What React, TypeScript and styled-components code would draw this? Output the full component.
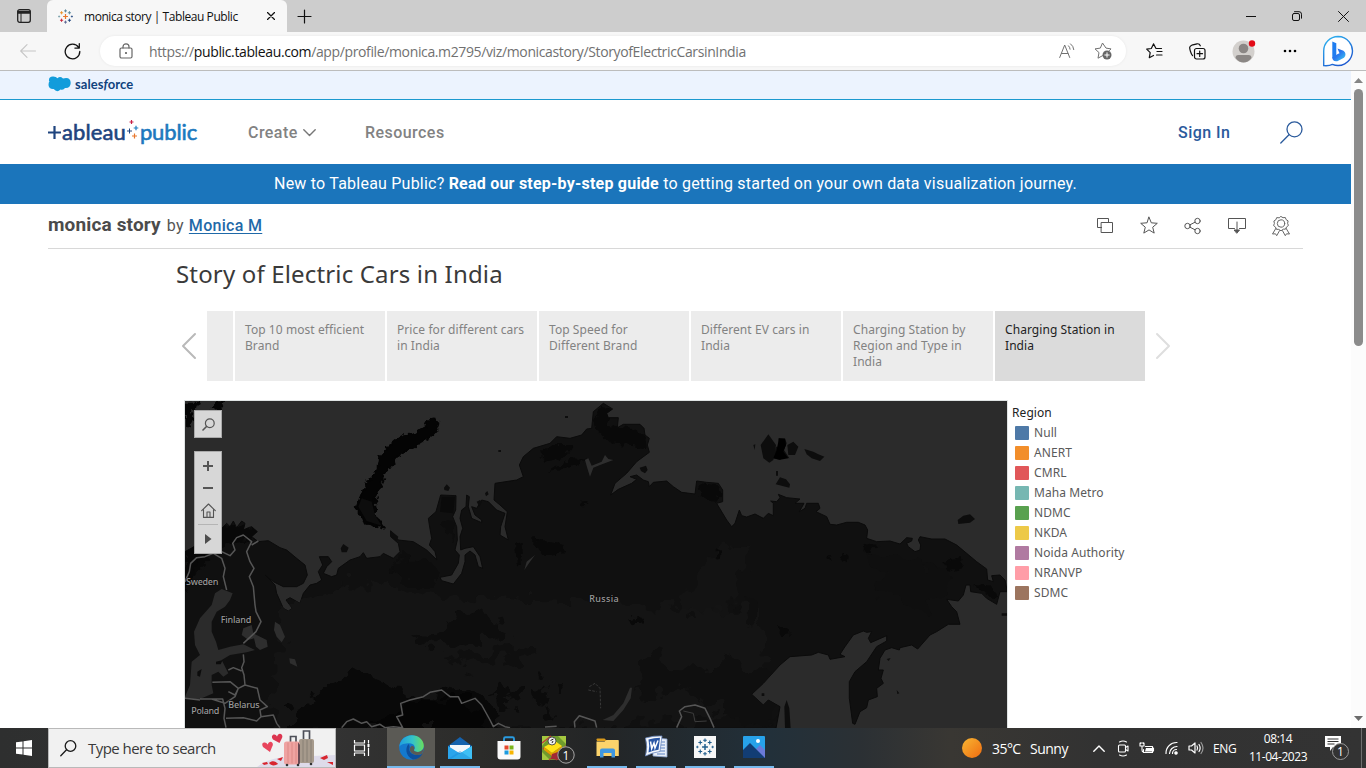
import React from "react";
import styled, { createGlobalStyle } from "styled-components";

const UI = `"Open Sans", "Noto Sans", sans-serif`;
const BENTON = `Roboto, "Liberation Sans", sans-serif`;
const BOOK = `"Noto Sans", "Open Sans", sans-serif`;

const GlobalStyle = createGlobalStyle`
  * { box-sizing: border-box; }
  html, body { margin: 0; padding: 0; background: #fff; overflow: hidden; }
  svg { display: block; flex: none; }
`;

const Screen = styled.div`
  width: 1366px;
  height: 768px;
  display: flex;
  flex-direction: column;
  overflow: hidden;
  font-family: ${UI};
`;

/* ---------- browser frame ---------- */

const TabStrip = styled.div`
  height: 32px;
  flex: none;
  display: flex;
  background: #cdcdcd;
`;

const StripButton = styled.div<{ $w: number }>`
  width: ${(p) => p.$w}px;
  display: flex;
  align-items: center;
  justify-content: center;
`;

const BrowserTab = styled.div`
  width: 240px;
  display: flex;
  align-items: center;
  padding-left: 11px;
  background: #f7f7f7;
  border-radius: 6px 6px 0 0;
`;

const TabTitle = styled.span`
  width: 194px;
  flex: none;
  padding-left: 11px;
  font-size: 12px;
  letter-spacing: -0.44px;
  color: #111;
  white-space: nowrap;
`;

const Spacer = styled.div`
  flex: 1;
`;

const Toolbar = styled.div`
  height: 39px;
  flex: none;
  display: flex;
  align-items: center;
  background: #f7f7f7;
  border-bottom: 1px solid #bcbcbc;
`;

const ToolCell = styled.div<{ $w: number }>`
  width: ${(p) => p.$w}px;
  flex: none;
  display: flex;
  align-items: center;
  justify-content: center;
`;

const AddressBar = styled.div`
  width: 1026px;
  flex: none;
  height: 30px;
  display: flex;
  align-items: center;
  padding-left: 18px;
  padding-right: 5px;
  border-radius: 15px;
  background: #fff;
  box-shadow: 0 0 3px rgba(0, 0, 0, 0.07);
`;

const Url = styled.span`
  flex: 1;
  padding-left: 15px;
  font-size: 14px;
  letter-spacing: -0.37px;
  color: #717171;
  white-space: nowrap;
  b { font-weight: 400; color: #111; }
`;

/* ---------- page ---------- */

const Viewport = styled.div`
  height: 657px;
  flex: none;
  display: flex;
`;

const Page = styled.div`
  width: 1351px;
  display: flex;
  flex-direction: column;
  overflow: hidden;
  background: #fff;
`;

const Scrollbar = styled.div`
  width: 15px;
  padding: 7px 3px;
  display: flex;
  flex-direction: column;
  align-items: center;
  background: #fcfcfc;
`;

const ScrollThumb = styled.div`
  width: 9px;
  height: 257px;
  margin-top: 6px;
  border-radius: 5px;
  background: #8b8b8b;
`;

const SalesforceBar = styled.div`
  height: 29px;
  flex: none;
  display: flex;
  align-items: center;
  padding: 0 0 2px 48px;
  background: #ecf3fe;
  border-bottom: 1px solid #1c99cf;
`;

const SalesforceName = styled.span`
  padding-left: 4px;
  font: 700 13px/16px Lato, sans-serif;
  letter-spacing: 0.05px;
  color: #10427d;
`;

const SiteHeader = styled.header`
  height: 64px;
  flex: none;
  display: flex;
  align-items: center;
  padding: 0 48px;
`;

const Logo = styled.div`
  width: 200px;
  display: flex;
  align-items: center;
`;

const LogoWord = styled.span<{ $c: string; $ls: number }>`
  font: 400 22px/26px Lato, sans-serif;
  letter-spacing: ${(p) => p.$ls}px;
  color: ${(p) => p.$c};
  -webkit-text-stroke: 0.6px ${(p) => p.$c};
`;

const NavItem = styled.div<{ $w: number; $c?: string }>`
  width: ${(p) => p.$w}px;
  display: flex;
  align-items: center;
  gap: 5px;
  padding-top: 2px;
  font: 500 16px/20px ${BENTON};
  letter-spacing: 0.45px;
  color: ${(p) => p.$c ?? "#828282"};
`;

const Banner = styled.div`
  height: 40px;
  flex: none;
  text-align: center;
  font: 400 16px/39px ${BENTON};
  letter-spacing: 0.22px;
  color: #fff;
  background: #1b75bb;
`;

const VizHeader = styled.div`
  height: 45px;
  flex: none;
  margin: 0 48px;
  display: flex;
  align-items: center;
  border-bottom: 1px solid #d8d8d8;
  font-family: ${BENTON};
`;

const VizTitle = styled.h1`
  margin: 0 6px 3px 0;
  font-size: 19px;
  font-weight: 700;
  letter-spacing: 0.15px;
  color: #4b4b4b;
`;

const Byline = styled.span`
  padding-bottom: 2px;
  font-size: 16px;
  letter-spacing: 0.2px;
  color: #555;
  a {
    margin-left: 1px;
    font-weight: 500;
    letter-spacing: 0.3px;
    color: #1f69a8;
    text-decoration: underline;
    text-underline-offset: 2px;
  }
`;

const ActionRow = styled.div`
  display: flex;
  align-items: center;
  gap: 20px;
  margin-right: 10px;
`;

const StoryTitle = styled.h2`
  height: 62px;
  flex: none;
  margin: 0;
  padding: 8px 0 0 176px;
  font: 400 24px/34px ${BOOK};
  letter-spacing: 0.16px;
  color: #3a3a3a;
`;

const StoryNav = styled.div`
  height: 70px;
  flex: none;
  display: flex;
  align-items: center;
  padding-left: 181px;
`;

const StoryPoints = styled.div`
  width: 938px;
  height: 70px;
  margin: 0 10px;
  display: flex;
  gap: 2px;
`;

const StoryPoint = styled.div<{ $w?: number; $active?: boolean }>`
  width: ${(p) => p.$w ?? 150}px;
  flex: none;
  padding: ${(p) => (p.$w ? "0" : "11px 10px")};
  font: 400 12px/16px ${BOOK};
  letter-spacing: 0.07px;
  white-space: pre;
  color: ${(p) => (p.$active ? "#222" : "#828282")};
  background: ${(p) => (p.$active ? "#dbdbdb" : "#ececec")};
`;

const Dashboard = styled.div`
  flex: 1;
  display: flex;
  padding: 20px 0 0 185px;
`;

const MapPane = styled.div`
  position: relative;
  width: 822px;
  height: 327px;
  background: #2b2b2b;
  outline: 1px solid #dfe3e3;
  svg text { font-family: "Noto Sans", sans-serif; }
`;

const MapControls = styled.div`
  position: absolute;
  left: 9px;
  top: 9px;
  display: flex;
  flex-direction: column;
  gap: 13px;
`;

const ControlGroup = styled.div<{ $h: number }>`
  width: 28px;
  height: ${(p) => p.$h}px;
  display: flex;
  flex-direction: column;
  align-items: center;
  background: #d7d7d7;
  border: 1px solid #aaa;
`;

const Control = styled.div<{ $h: number; $rule?: boolean }>`
  width: 20px;
  height: ${(p) => p.$h}px;
  display: flex;
  align-items: center;
  justify-content: center;
  border-top: ${(p) => (p.$rule ? "1px solid #b5b5b5" : "none")};
`;

const Legend = styled.div`
  padding: 2px 0 0 5px;
  font: 400 12px/20px ${BOOK};
  letter-spacing: 0.08px;
  color: #5a5a5a;
`;

const LegendTitle = styled.div`
  color: #222;
`;

const LegendRow = styled.div`
  height: 20px;
  display: flex;
  align-items: center;
  gap: 5px;
  padding-left: 3px;
`;

const Swatch = styled.span<{ $c: string }>`
  width: 14px;
  height: 14px;
  border-radius: 1px;
  background: ${(p) => p.$c};
`;

/* ---------- taskbar ---------- */

const Taskbar = styled.div`
  height: 40px;
  flex: none;
  display: flex;
  color: #fff;
  background: linear-gradient(90deg, #2e2f2f 0, #333 330px, #2c2c2a 480px, #232526 600px, #22303a 770px, #2b3034 860px, #393733 950px, #323232 1100px, #333 1366px);
`;

const StartButton = styled.div`
  width: 48px;
  display: flex;
  align-items: center;
  justify-content: center;
`;

const SearchBox = styled.div`
  width: 288px;
  height: 40px;
  display: flex;
  align-items: center;
  padding-left: 11px;
  background: #f1f1f1;
  border: 1px solid #b9b9b9;
`;

const SearchHint = styled.span`
  width: 164px;
  padding-left: 11px;
  font-size: 15px;
  letter-spacing: -0.54px;
  color: #3a3a3a;
  white-space: nowrap;
`;

const AppButton = styled.div<{ $top: number; $open?: boolean; $active?: boolean }>`
  width: 49px;
  height: 40px;
  padding: ${(p) => p.$top}px ${(p) => (p.$active ? 1 : 5)}px 0 ${(p) => (p.$active ? 0 : 4)}px;
  display: flex;
  flex-direction: column;
  justify-content: space-between;
  align-items: center;
  background: ${(p) => (p.$active ? "linear-gradient(90deg, #5b5a55 48px, transparent 48px)" : "transparent")};
  &::after {
    content: "";
    width: 100%;
    height: 2px;
    background: ${(p) => (p.$open || p.$active ? "#76b9ed" : "transparent")};
  }
`;

const TrayItem = styled.div<{ $w: number }>`
  width: ${(p) => p.$w}px;
  flex: none;
  display: flex;
  align-items: center;
  justify-content: center;
`;

const TrayText = styled.span<{ $w: number; $s: number; $ls?: number; $pl?: number }>`
  width: ${(p) => p.$w}px;
  flex: none;
  align-self: center;
  padding-left: ${(p) => p.$pl ?? 0}px;
  font-size: ${(p) => p.$s}px;
  letter-spacing: ${(p) => p.$ls ?? 0}px;
  white-space: nowrap;
`;

const Clock = styled.div`
  width: 68px;
  display: flex;
  flex-direction: column;
  align-items: center;
  padding-top: 2px;
  font-size: 12px;
  line-height: 18px;
  letter-spacing: -0.45px;
  white-space: nowrap;
`;

const DesktopEdge = styled.div`
  width: 1px;
  height: 40px;
  margin-right: 4px;
  background: #6e6e6e;
`;

/* ---------- drawings ---------- */

type P = { w: number; h: number; vb?: string; c?: string; sw?: number; children: React.ReactNode };
const Line = ({ w, h, vb, c = "#222", sw = 1, children }: P) => (
  <svg width={w} height={h} viewBox={vb ?? `0 0 ${w} ${h}`} fill="none" stroke={c} strokeWidth={sw} strokeLinecap="round" strokeLinejoin="round">
    {children}
  </svg>
);

const plus = (x: number, y: number, r: number) => `M${x - r} ${y}h${2 * r}M${x} ${y - r}v${2 * r}`;

const TableauMark = ({ size, mono }: { size: number; mono?: boolean }) => {
  const k = (c: string) => (mono ? "#1f5d8c" : c);
  return (
    <svg width={size} height={size} viewBox="0 0 16 16" fill="none">
      <path d={plus(8, 8, 2.6)} stroke={k("#e8762b")} strokeWidth="1.3" />
      <path d={plus(8, 2, 1.6)} stroke={k("#5b879b")} strokeWidth="1" />
      <path d={plus(8, 14, 1.6)} stroke={k("#5b6591")} strokeWidth="1" />
      <path d={plus(3.8, 4, 1.7)} stroke={k("#eb9129")} strokeWidth="1" />
      <path d={plus(12.2, 4, 1.7)} stroke={k("#59879b")} strokeWidth="1" />
      <path d={plus(3.8, 12, 1.7)} stroke={k("#c72035")} strokeWidth="1" />
      <path d={plus(12.2, 12, 1.7)} stroke={k("#1f447e")} strokeWidth="1" />
      <path d={plus(1.2, 8, 1.1)} stroke={k("#7099a6")} strokeWidth="0.8" />
      <path d={plus(14.8, 8, 1.1)} stroke={k("#1f447e")} strokeWidth="0.8" />
    </svg>
  );
};

const BingIcon = () => (
  <svg width="32" height="32" viewBox="0 0 32 32">
    <defs>
      <linearGradient id="bRing" x1="0" y1="0" x2="0.6" y2="1">
        <stop offset="0" stopColor="#2fb9f2" />
        <stop offset="1" stopColor="#1f5bd0" />
      </linearGradient>
      <linearGradient id="bBody" x1="0" y1="0" x2="1" y2="1">
        <stop offset="0" stopColor="#1c52d8" />
        <stop offset="0.5" stopColor="#2b7df0" />
        <stop offset="1" stopColor="#3fd2ee" />
      </linearGradient>
    </defs>
    <path d="M16 1.500a14.500 14.500 0 1 1-5.600 27.900C8 30.600 5 30.900 1.700 30.600V16A14.500 14.500 0 0 1 16 1.500z" fill="#fff" stroke="url(#bRing)" strokeWidth="1.400" />
    <path d="M10.300 6.500l4 1.700v12.300l-4 3z" fill="#1f7df0" />
    <path d="M10.300 22.500l5-3.300 2.200-1-2-4.800 6 2.400a4.300 4.300 0 0 1 .5 6.900l-6.700 3.500c-3 .6-5-.9-5-3.700z" fill="url(#bBody)" />
  </svg>
);

const EdgeIcon = () => (
  <svg width="25" height="25" viewBox="0 0 24 24">
    <defs>
      <linearGradient id="eTop" x1="0" y1="0.3" x2="1" y2="0.3">
        <stop offset="0" stopColor="#1f9de0" />
        <stop offset="0.55" stopColor="#35c4c8" />
        <stop offset="1" stopColor="#6ade5b" />
      </linearGradient>
    </defs>
    <circle cx="12" cy="12" r="11.800" fill="#1479ce" />
    <path d="M.3 11.500C.8 5 6 .2 12.300.2 19 .2 23.800 5 23.800 10.200c0 3.700-2.800 6-6 6-2.700 0-4-1.200-3.200-2.300 1.600-2.300-.2-6-4.600-6-4 0-8.500 1-9.700 3.600z" fill="url(#eTop)" />
    <path d="M9.500 8.700C6 11 5.500 20.500 13.500 23.600 18 23.300 21 21 22.500 18c-4.500 2.600-14.500 1.200-12.300-6.500z" fill="#0e4f9d" />
    <path d="M14.700 13.500c-1 1.300.3 2.700 3 2.700 2.500 0 5-1.200 5.900-3.500-.2 2-.7 4-1.800 5.500-4 2.300-10.300.5-11.300-3.300-.5-2.200.6-4 2-4.500 1.800.2 2.800 1.700 2.200 3.100z" fill="#5b5a55" />
  </svg>
);

const MailIcon = () => (
  <svg width="24" height="22" viewBox="0 0 24 22">
    <path d="M0 9L12 0l12 9v3H0z" fill="#1562ad" />
    <path d="M2 8h20v8H2z" fill="#f3f6fa" />
    <path d="M0 9l12 7.500L24 9v13H0z" fill="#2aa5ec" />
    <path d="M24 9v13H3z" fill="#3fc0f5" />
    <path d="M0 22l12-8 12 8z" fill="#1b90dc" opacity=".5" />
  </svg>
);

const StoreIcon = () => (
  <svg width="24" height="24" viewBox="0 0 24 24">
    <path d="M7 7V2.800A1.500 1.500 0 0 1 8.500 1.300h7A1.500 1.500 0 0 1 17 2.800V7" fill="none" stroke="#2a9be0" strokeWidth="1.900" />
    <path d="M.5 5h23v15.500a3 3 0 0 1-3 3h-17a3 3 0 0 1-3-3z" fill="#fafafa" />
    <path d="M7.500 9.500h4v4h-4z" fill="#e5492d" />
    <path d="M12.500 9.500h4v4h-4z" fill="#7bb51b" />
    <path d="M7.500 14.500h4v4h-4z" fill="#1b9be0" />
    <path d="M12.500 14.500h4v4h-4z" fill="#f7b500" />
  </svg>
);

const GameIcon = () => (
  <svg width="34" height="30" viewBox="0 0 34 30">
    <path d="M1 2h24v24H1z" fill="#6f9a2c" />
    <path d="M1 2h8L1 12zM17 2h8v8zM1 18l8 8H1z" fill="#a5c840" />
    <path d="M1 9l9-7M25 12L8 26M2 14l14 12" stroke="#c23a3a" strokeWidth="1.200" />
    <path d="M3 13l11-6 7 5-10 7z" fill="#ffe21a" />
    <path d="M3 13l8 6v3l-8-6zM11 19l10-7v3l-10 7z" fill="#e0a300" />
    <circle cx="11" cy="7" r="4" fill="#eee" stroke="#333" strokeWidth=".800" />
    <path d="M9.500 6.500l3-1.500M11 9l1-2" stroke="#222" strokeWidth="1" />
    <path d="M11 20l12-4 2 6-6 4-9-1z" fill="#a02a35" />
    <circle cx="25" cy="21" r="8.200" fill="#2b2b2b" stroke="#a5a5a5" strokeWidth="1" />
    <text x="25" y="25.500" fontSize="12" fill="#fff" textAnchor="middle" fontFamily="Open Sans">1</text>
  </svg>
);

const FolderIcon = () => (
  <svg width="23" height="20" viewBox="0 0 23 20">
    <path d="M.5 1.500A1 1 0 0 1 1.500.5h7L11 3H1z" fill="#d99a1c" />
    <path d="M.5 3.500h8l2-1.500h11.500a.8.8 0 0 1 .8.800V18H.5z" fill="#fbd36b" />
    <path d="M4 19.500V12.500A2 2 0 0 1 6 10.500h11a2 2 0 0 1 2 2v7h-3.500V15h-8v4.500z" fill="#3f97e0" />
  </svg>
);

const WordIcon = () => (
  <svg width="24" height="24" viewBox="0 0 24 24">
    <path d="M9 3l14 1v18L9 21z" fill="#e8eef8" stroke="#8aa3cf" strokeWidth=".8" />
    <path d="M16 7h5M16 10h5M15 13h6M15 16h6M13 19h8" stroke="#5d83c4" strokeWidth="1" />
    <path d="M1.500 3Q10 .5 18 1L16 16.500Q8 17.500 1.500 21Q4 12 1.500 3z" fill="#f5f8fd" stroke="#6d8ac0" strokeWidth=".8" />
    <path d="M4.500 4.500Q10 2.800 16 2.700L14.500 14.800Q9 15.500 4.500 17.500Q6 11 4.500 4.500z" fill="#2a57a5" />
    <path d="M6.500 6.500l1.200 7 2.300-5.500 1 5 3-7.500" fill="none" stroke="#fff" strokeWidth="1.500" />
  </svg>
);

const PhotosIcon = () => (
  <svg width="22" height="22" viewBox="0 0 22 22">
    <rect width="22" height="22" rx="1" fill="#27a2ea" />
    <path d="M12 14l5-5 5 5v8H12z" fill="#6a7ad8" />
    <path d="M0 14l7-7 15 15H0z" fill="#123d74" />
    <circle cx="15" cy="5" r="2" fill="#fff" />
  </svg>
);

const Suitcases = () => (
  <svg width="78" height="38" viewBox="0 0 78 38">
    <path d="M0 38Q12 28 34 28L78 26V38z" fill="#dedbea" />
    <path d="M13 23L6 18Q4 14 7 13.500Q9.500 13 10.500 15.500Q12 12 14.500 13Q17 14.500 15 18z" fill="#e8455c" />
    <path d="M22.500 14L16 10.500Q13.500 7 16.500 5.500Q19 5 20 7.500Q21 4 24 5Q26.500 7 24.500 10z" fill="#dc3550" />
    <path d="M46.500 11V2h6v9M33.500 13V7.500h5.500V13" fill="none" stroke="#4d4f58" strokeWidth="1.700" />
    <rect x="42" y="10" width="15" height="24" rx="2" fill="#a69a8c" />
    <path d="M46 11v22M50 11v22M54 11v22" stroke="#82786e" strokeWidth=".8" />
    <rect x="27" y="12.500" width="16" height="23" rx="2.500" fill="#efa3a1" />
    <path d="M31 13.500v21M35 13.500v21M39 13.500v21" stroke="#d98482" strokeWidth=".8" />
    <path d="M41 13.500l2 2v19l-2 1z" fill="#694c55" />
    <path d="M12 34c3-3 7-2 9 1-3 2-7 2-9-1zM5 34l5-1 1 2-4 1zM20 30l6-2-2 4zM63 29l7-3 1 3-4 2zM70 33l6 0 0 3z" fill="#d8262f" />
    <circle cx="30" cy="36" r="1.300" fill="#333" /><circle cx="41" cy="36" r="1.300" fill="#333" /><circle cx="54" cy="35" r="1.300" fill="#333" />
  </svg>
);

/* Map geometry uses three units per screen pixel. */
const MAINLAND =
  "M15 470L42 455L60 430L125 400L140 385L150 395L160 378L170 398L185 378L195 385L190 405L205 398L215 395L232 410L215 425L235 440L265 437L300 458L320 465L350 490L375 510L382 540L370 565L350 575L310 575L280 560L255 540L285 570L290 595L310 640L325 648L337 640L318 615L330 608L360 625L370 595L390 570L410 565L425 555L415 530L428 510L418 485L445 485L455 500L440 515L430 535L455 545L470 540L475 520L510 495L540 485L550 473L560 490L600 485L610 475L640 490L660 470L655 445L632 425L632 408L655 435L700 440L740 465L771 495L765 470L748 450L755 430L748 390L745 370L768 350L782 300L828 302L827 345L818 365L830 395L832 435L825 465L838 480L835 505L815 540L780 547L785 557L820 567L845 535L855 500L855 480L870 468L885 480L895 515L908 520L900 485L880 455L855 460L842 465L840 425L848 400L840 370L845 345L858 335L860 300L868 305L865 335L875 370L905 383L905 375L885 360L875 335L890 340L905 315L925 320L950 345L975 355L962 395L960 420L985 435L975 395L982 350L960 330L942 315L945 265L1010 255L1030 245L1018 210L1030 185L1060 160L1110 145L1130 125L1170 130L1205 120L1220 102L1235 100L1240 50L1270 25L1298 42L1280 55L1285 68L1315 68L1312 98L1330 88L1380 88L1392 100L1395 120L1408 130L1402 150L1408 172L1370 200L1340 235L1305 265L1292 300L1315 283L1355 265L1370 253L1350 245L1370 240L1390 255L1405 260L1408 275L1420 262L1460 258L1480 275L1505 292L1545 297L1550 258L1580 262L1615 265L1628 285L1628 320L1610 325L1640 375L1655 395L1665 385L1678 345L1685 362L1700 366L1725 357L1750 370L1765 355L1780 362L1780 325L1772 318L1790 320L1800 308L1795 298L1820 308L1860 312L1845 325L1872 325L1858 350L1875 340L1880 325L1915 325L1920 340L1908 350L1940 365L1950 388L1970 390L2000 382L2035 382L2055 390L2063 405L2060 430L2090 440L2130 438L2160 447L2180 428L2197 430L2195 438L2180 445L2185 455L2205 470L2220 465L2222 450L2215 435L2220 425L2255 432L2295 432L2330 450L2360 475L2390 500L2420 522L2423 555L2440 560L2435 542L2460 540L2475 555L2482 590L2460 590L2450 628L2420 610L2405 595L2372 590L2370 570L2358 570L2350 600L2335 618L2300 613L2315 635L2330 650L2340 688L2305 688L2270 710L2250 720L2213 762L2195 750L2160 758L2158 765L2135 758L2115 765L2100 790L2095 825L2110 825L2103 850L2110 865L2090 880L2092 905L2065 915L2060 938L2040 950L2025 988L2018 985L2008 910L2008 860L2025 830L2060 800L2090 755L2120 738L2120 722L2072 743L2065 730L2075 710L2060 712L2050 708L2020 720L1995 755L1980 778L1995 785L1950 793L1945 780L1915 772L1895 780L1830 785L1800 810L1750 865L1715 898L1750 930L1765 915L1800 935L1788 1000L15 1000Z";

const BALTIC =
  "M15 905L30 870L35 800L60 780L45 750L42 710L60 670L95 630L105 595L125 582L158 595L150 615L135 635L110 650L95 680L95 710L108 740L115 765L150 755L190 748L225 765L200 772L150 780L125 795L145 835L130 845L115 830L95 840L95 870L100 895L60 912L15 912Z";

const ISLANDS =
  "M775 85Q778 70 755 70Q735 72 733 95L700 118L665 120L630 150L598 185L590 230L565 255L545 295L530 335L548 380L600 395L611 398L590 370L582 325L598 280L620 230L655 180L700 155L750 125Q775 110 775 85Z";

const SMALL_ISLANDS =
  "M482 460L490 447L506 458L500 472L485 472ZM792 278L800 268L810 278L805 288L793 285ZM1742 150L1765 118L1788 150L1780 195L1768 203L1750 190ZM1780 190L1788 155L1798 155L1795 130L1815 130L1820 145L1812 165L1828 190L1810 185L1800 195ZM1822 150L1840 140L1855 155L1845 180L1825 180ZM1873 162L1900 170L1915 178L1933 185L1920 198L1895 190L1880 178ZM1787 268L1800 247L1818 253L1830 268L1828 278ZM2333 375L2350 362L2370 358L2385 372L2370 383L2335 387ZM1813 935L1820 915L1828 940L1832 1000L1815 1000ZM1379 218L1398 212L1403 225L1395 235L1383 228ZM915 295L922 288L926 298L918 304ZM890 320L900 315L906 322L898 335ZM1720 150L1726 148L1724 165ZM1788 228h6v14h-6zM2465 655h16v7h-16zM2120 792l12-3-6 9zM2150 885l8 10-6 2zM955 165h8v6h-8zM1155 63h9v6h-9zM1745 895h8v8h-8z";

const LAKES =
  "M190 700L215 690L220 715L260 735L263 755L240 765L228 755L222 730L205 735L185 720ZM285 680L300 690L315 725L305 742L290 725L282 705ZM328 790L345 793L352 815L330 805ZM1033 525L1040 500L1065 480L1050 500ZM1215 195L1225 190L1235 212L1265 200L1275 180L1285 192L1300 195L1260 210L1240 218L1230 245L1222 220ZM1350 878L1356 878L1352 910L1330 945L1300 978L1268 975L1300 960L1330 925Z";

const RIDGES =
  "M15 490L60 470L90 490L50 530L15 580ZM1080 170L1120 150L1180 150L1150 190L1090 200ZM1100 230L1180 190L1215 195L1150 225ZM1240 95L1260 35L1295 42L1280 90L1340 95L1395 120L1400 160L1360 150L1290 145ZM1555 265L1610 270L1625 300L1600 320L1560 300ZM1060 425L1100 440L1150 450L1155 475L1100 480L1060 455ZM1005 440L1025 450L1025 515L1010 505ZM2290 500L2340 490L2350 515L2310 530ZM1790 690L1830 705L1835 715L1800 718ZM2055 445L2095 450L2070 475L2050 468ZM1932 490L1950 480L1955 495ZM1988 470L2003 480L2000 505L1985 495ZM2380 570L2440 575L2455 610L2410 595ZM1345 675L1380 665L1390 680L1360 692ZM1610 460L1625 465L1622 498L1612 490ZM1200 320L1220 318L1218 330L1200 332Z";

const MapDrawing = () => (
  <svg width="822" height="327" viewBox="15 18 2466 981">
    <defs>
      <filter id="relief" filterUnits="userSpaceOnUse" x="15" y="18" width="2466" height="981" colorInterpolationFilters="sRGB">
        <feTurbulence type="fractalNoise" baseFrequency="0.018" numOctaves="3" seed="4" result="n" />
        <feDisplacementMap in="SourceGraphic" in2="n" scale="110" xChannelSelector="R" yChannelSelector="G" />
      </filter>
      <filter id="ragged" filterUnits="userSpaceOnUse" x="15" y="18" width="2466" height="981" colorInterpolationFilters="sRGB">
        <feTurbulence type="fractalNoise" baseFrequency="0.060" numOctaves="2" seed="9" result="n" />
        <feDisplacementMap in="SourceGraphic" in2="n" scale="26" xChannelSelector="R" yChannelSelector="G" />
      </filter>
      <clipPath id="shore"><path d={MAINLAND} /></clipPath>
    </defs>
    <path d={MAINLAND} fill="#101010" stroke="#0b0b0b" strokeWidth="3" />
    <g clipPath="url(#shore)">
      <g filter="url(#relief)">
        <path d="M300 640L520 560L760 600L1050 620L1400 630L1640 640L1740 660L1760 850L1700 960L1300 1000L280 1000Z" fill="#141414" />
        <path d="M1500 600L1560 540L1620 470L1700 450L1680 540L1660 650L1500 640Z" fill="#131313" />
        <path d="M330 940L420 880L520 830L640 860L700 910L800 880L880 890L980 960L960 1010L330 1010Z" fill="#090909" />
        <path d="M560 1010L640 960L760 900L860 900L920 1010Z" fill="#050505" />
        <path d="M690 740L780 700L860 640L930 670L1000 720L920 740L840 740L780 760Z" fill="#0d0d0d" />
        <path d="M800 790L900 770L1060 740L1080 770L950 800L840 820Z" fill="#0f0f0f" />
        <path d="M1050 880L1110 850L1100 900L1110 950L1060 940ZM960 870L1010 900L1000 940L940 900ZM1140 850L1165 850L1150 890L1130 890Z" fill="#0b0b0b" />
        <path d="M1390 800L1440 770L1470 810L1560 820L1640 800L1780 830L1780 1010L1640 960L1500 870L1360 900Z" fill="#0f0f0f" />
        <path d="M1510 665L1550 660L1540 690L1515 690ZM1680 620L1720 610L1730 680L1690 690Z" fill="#0f0f0f" />
        <path d="M640 500L740 490L760 560L660 560ZM780 390L820 400L810 450L785 440Z" fill="#0d0d0d" />
        <path d="M2060 470L2200 480L2330 560L2240 640L2120 600Z" fill="#0f0f0f" />
      </g>
      <path d={RIDGES} fill="#090909" filter="url(#ragged)" />
      <path d="M785 305L825 305L820 355L780 350Z" fill="#0a0a0a" />
      <path d="M15 460L130 390L240 400L230 430L150 445L60 490L15 590Z" fill="#080808" filter="url(#ragged)" />
    </g>
    <path d="M15 20L55 20L48 38L32 50L42 68L30 96L15 78ZM95 45L108 20L138 18L122 42Z" fill="#050505" filter="url(#ragged)" />
    <path d={BALTIC} fill="#2b2b2b" />
    <path d="M52 830L65 822L60 845L52 842ZM108 800L128 795L122 808L108 808Z" fill="#0c0c0c" />
    <path d={LAKES} fill="#2e2e2e" />
    <path d={ISLANDS} fill="#040404" stroke="#040404" strokeWidth="5" filter="url(#ragged)" />
    <path d="M535 335L545 310L575 320L585 360L605 392L560 378Z" fill="#0d0d0d" />
    <path d={SMALL_ISLANDS} fill="#0d0d0d" />
    <path d="M1780 190L1790 165L1797 130L1815 132L1818 150L1810 170L1825 190L1800 194Z" fill="#000" />
    <path d="M630 405L655 425L650 438L632 422Z" fill="#0d0d0d" />
    <g fill="none" stroke="#565656" strokeWidth="4.500" strokeLinejoin="round">
      <path d="M15 560L28 530L32 505L50 488L75 485L100 475L125 490L135 520L130 545L140 585M125 470L150 482L165 465L158 445L170 428L190 420L215 440L200 470L210 500L222 520L208 545L220 575L225 630L228 650L243 680L228 710L190 745M235 438L215 450M190 778L192 800L185 818L192 840L195 870L175 880L165 900L145 890M145 825L160 818L185 828M97 862L150 860L175 880L165 905L135 925L95 912M60 912L128 912L135 940L132 970L138 998M195 870L232 880L240 915L262 935L240 945L243 965L280 960L290 985L300 998M138 970L190 968L230 978L243 965M15 910L60 915" />
      <path d="M485 998L500 980L520 972L545 985L560 980L575 995L600 988L615 998L640 995L668 998L650 965L668 960L662 925L690 915L730 905L750 892L785 885L810 905L835 905L845 925L885 910L905 930L930 975L940 995L955 985L975 995L990 998M1095 996L1130 994M1185 998L1183 980L1198 962L1245 978L1250 998M1490 998L1505 965L1498 948L1515 935L1545 930L1575 940L1590 970L1602 998" />
      <path d="M1510 948L1540 955L1545 980L1580 978" strokeWidth="3" stroke="#3c3c3c" />
      <path d="M1228 875L1245 865L1260 880L1262 940M1225 885L1250 890" strokeWidth="3" strokeDasharray="8 4" stroke="#383838" />
    </g>
    <g fontSize="27" fill="#9a9a9a" stroke="#0a0a0a" strokeWidth="3" paintOrder="stroke" fontWeight="500">
      <text x="18" y="570" textLength="97">Sweden</text>
      <text x="122" y="684" textLength="92">Finland</text>
      <text x="145" y="938" textLength="94">Belarus</text>
      <text x="34" y="958" textLength="84">Poland</text>
      <text x="1228" y="620" textLength="88">Russia</text>
    </g>
  </svg>
);

const points = [
  "Top 10 most efficient\nBrand",
  "Price for different cars\nin India",
  "Top Speed for\nDifferent Brand",
  "Different EV cars in\nIndia",
  "Charging Station by\nRegion and Type in\nIndia",
  "Charging Station in\nIndia",
];

const regions: [string, string][] = [
  ["Null", "#4e79a7"],
  ["ANERT", "#f28e2b"],
  ["CMRL", "#e15759"],
  ["Maha Metro", "#76b7b2"],
  ["NDMC", "#59a14f"],
  ["NKDA", "#edc948"],
  ["Noida Authority", "#b07aa1"],
  ["NRANVP", "#ff9da7"],
  ["SDMC", "#9c755f"],
];

const star = "M9 1.200l2.300 5.600 6 .5-4.600 3.900 1.500 5.900L9 13.900l-5.200 3.200 1.500-5.900L.7 7.300l6-.5z";

export default function App() {
  return (
    <Screen>
      <GlobalStyle />
      <TabStrip>
        <StripButton $w={47}>
          <Line w={14} h={14} sw={1.3}>
            <rect x="0.700" y="0.700" width="12.600" height="12.600" rx="2" />
            <path d="M1 2.500h12M1 4h12" />
            <path d="M4 4v9" strokeWidth="1" />
          </Line>
        </StripButton>
        <BrowserTab>
          <TableauMark size={15} />
          <TabTitle>monica story | Tableau Public</TabTitle>
          <Line w={8} h={8} sw={1.3} c="#111"><path d="M.5.5l7 7M7.500.5l-7 7" /></Line>
        </BrowserTab>
        <StripButton $w={35}>
          <Line w={15} h={15} sw={1.2} c="#111"><path d="M7.500 1v13M1 7.500h13" /></Line>
        </StripButton>
        <Spacer />
        <StripButton $w={46}><Line w={10} h={10} c="#111"><path d="M0 5.500h10" /></Line></StripButton>
        <StripButton $w={46}>
          <Line w={10} h={10} c="#111"><rect x=".5" y="2.500" width="7" height="7" rx="1.500" /><path d="M2.500.7h4.500a2.500 2.500 0 0 1 2.500 2.500v4" /></Line>
        </StripButton>
        <StripButton $w={46}><Line w={11} h={11} c="#111"><path d="M.5.5l10 10M10.500.5l-10 10" /></Line></StripButton>
      </TabStrip>

      <Toolbar>
        <ToolCell $w={56}><Line w={16} h={14} c="#c6c6c6" sw={1.1}><path d="M15.500 7H.7M7 .7L.7 7 7 13.300" /></Line></ToolCell>
        <ToolCell $w={32}>
          <Line w={17} h={17} c="#111" sw={1.3}><path d="M14.600 4.500A7.300 7.300 0 1 0 15.800 8.500M15.300.7v4.400h-4.400" /></Line>
        </ToolCell>
        <ToolCell $w={12}>{null}</ToolCell>
        <AddressBar>
          <Line w={16} h={16} c="#666" sw={1.2}>
            <rect x="2" y="5" width="12" height="10" rx="1.500" />
            <path d="M5 5V3.800a3 3 0 0 1 6 0V5" />
            <circle cx="8" cy="10" r=".5" fill="#666" />
          </Line>
          <Url>https://<b>public.tableau.com</b>/app/profile/monica.m2795/viz/monicastory/StoryofElectricCarsinIndia</Url>
          <ToolCell $w={36}>
            <Line w={16} h={16} c="#717171"><path d="M.7 14.500L5.700 2l5 12.500M2.500 10.500h6.500M9.500 2.800a5 5 0 0 1 1.600 3.400M11.500.8a8 8 0 0 1 3.300 5.800" /></Line>
          </ToolCell>
          <ToolCell $w={36}>
            <Line w={18} h={18} c="#717171">
              <path d="M15.500 8.500l1.500-1.600-5-.8L8.500 1 6.300 6.100l-5.300.8 4 3.700-1 5.600 4.500-2.500" />
              <circle cx="13" cy="13" r="4.500" fill="#666" stroke="none" />
              <path d="M13 10.800v4.400M10.800 13h4.400" stroke="#fff" />
            </Line>
          </ToolCell>
        </AddressBar>
        <ToolCell $w={56}>
          <Line w={17} h={16} c="#111" sw={1.2}>
            <path d="M15.500 5.500H10L7.500.9 5.300 5.500.7 6.200l3.500 3.500-.9 5L7.500 12.500M11 8.500h5M10.500 12h5.500" />
          </Line>
        </ToolCell>
        <ToolCell $w={32}>
          <Line w={18} h={17} c="#111" sw={1.2}>
            <rect x="5.500" y="5.500" width="10.500" height="10.500" rx="2" fill="#f7f7f7" />
            <path d="M10.700 8v5.500M8 10.700h5.500M3.500 12.500C2 11 .3 5.500.8 4c.3-1 1-1.400 2-1.800L8 .8c1.700-.3 2.700.3 3.300 2" />
          </Line>
        </ToolCell>
        <ToolCell $w={60}>
          <svg width="24" height="24" viewBox="0 0 24 24">
            <circle cx="11.500" cy="12.500" r="11" fill="#d3d0cd" />
            <circle cx="11.500" cy="9.500" r="4.800" fill="#8b8785" />
            <path d="M3.500 19q0-3 3-3h10q3 0 3 3-3.500 4.500-8 4.500T3.500 19z" fill="#8b8785" />
            <circle cx="20" cy="4.500" r="3.200" fill="#e30b17" />
          </svg>
        </ToolCell>
        <ToolCell $w={32}>
          <svg width="14" height="4"><circle cx="2" cy="2" r="1.300" /><circle cx="7" cy="2" r="1.300" /><circle cx="12" cy="2" r="1.300" /></svg>
        </ToolCell>
        <Spacer />
        <ToolCell $w={56}><BingIcon /></ToolCell>
      </Toolbar>

      <Viewport>
        <Page>
          <SalesforceBar>
            <svg width="23" height="16" viewBox="0 0 23 16">
              <path d="M1 5Q.5.500 5 .6 8 .5 9.500 2.300 12-.3 15 2.500 22.500.5 22.700 7q-.3 5.500-5.700 5-1.500 2.500-4.500 1.500-3.500 3.500-6.800-.5Q1 13.500.5 9q0-2.500 1-4z" fill="#129cdb" />
            </svg>
            <SalesforceName>sales<i>f</i>orce</SalesforceName>
          </SalesforceBar>

          <SiteHeader>
            <Logo>
              <Line w={14} h={17} c="#1f447e" sw={2.2}><path d="M0 8.500h13M6.500 2v13" strokeLinecap="butt" /></Line>
              <LogoWord $c="#1f447e" $ls={0.1}>ableau</LogoWord>
              <svg width="14" height="28" viewBox="0 0 14 28" fill="none">
                <path d={plus(5.5, 4, 2)} stroke="#c72045" strokeWidth="1.200" />
                <path d={plus(3.5, 13, 2.5)} stroke="#1f447e" strokeWidth="1" />
                <path d={plus(10, 10, 2.3)} stroke="#1c7cc0" strokeWidth="1.200" />
                <path d={plus(8.5, 18, 2.5)} stroke="#e8762b" strokeWidth="1.200" />
              </svg>
              <LogoWord $c="#1c79be" $ls={-0.1}>public</LogoWord>
            </Logo>
            <NavItem $w={117}>
              Create
              <Line w={13} h={8} c="#777" sw={1.4}><path d="M.8.8l5.700 5.800L12.200.8" /></Line>
            </NavItem>
            <NavItem $w={100}>Resources</NavItem>
            <Spacer />
            <NavItem $w={102} $c="#2a5a9c">Sign In</NavItem>
            <Line w={23} h={23} c="#2a5a9c" sw={1.3}><circle cx="14.500" cy="8.300" r="7.500" /><path d="M9 13.800L.8 22" /></Line>
          </SiteHeader>

          <Banner>New to Tableau Public? <b>Read our step-by-step guide</b> to getting started on your own data visualization journey.</Banner>

          <VizHeader>
            <VizTitle>monica story</VizTitle>
            <Byline>by <a>Monica M</a></Byline>
            <Spacer />
            <ActionRow>
              <Line w={24} h={20} c="#555"><path d="M8.500 11.500H4.500V2.500h11v4" strokeLinejoin="miter" /><rect x="8.500" y="6.500" width="11" height="10" /></Line>
              <Line w={24} h={20} vb="-3 0 24 20" c="#555"><path d={star} /></Line>
              <Line w={24} h={20} c="#555">
                <circle cx="6.500" cy="10" r="2.700" /><circle cx="16.500" cy="5" r="2.700" /><circle cx="16.500" cy="15" r="2.700" /><path d="M9 8.800l5-2.600M9 11.200l5 2.600" />
              </Line>
              <Line w={24} h={20} c="#555"><path d="M9.500 12.500h-6v-10h17v10h-6" strokeLinejoin="miter" /><path d="M12 6v10" /><path d="M9.500 14h5L12 17z" fill="#555" /></Line>
              <Line w={24} h={20} c="#666">
                <circle cx="12" cy="7.500" r="3.700" />
                <path d="M12 .5l2 1.200 2.300-.2.800 2.100 2 1.300-.5 2.400.8 2.200-1.900 1.500-.9 2.100-2.300.1L12 14.800l-2.300-1.400-2.300-.1-.9-2.200-1.900-1.500.8-2.200-.5-2.400 2-1.300.8-2.100 2.300.2z" />
                <path d="M6.800 12.500L3.500 18l3-.2 1.200 1.900 2.800-5M17.200 12.500l3.300 5.500-3-.2-1.200 1.900-2.800-5" />
              </Line>
            </ActionRow>
          </VizHeader>

          <StoryTitle>Story of Electric Cars in India</StoryTitle>

          <StoryNav>
            <Line w={16} h={28} c="#b9b9b9" sw={2}><path d="M14 2L2 14l12 12" /></Line>
            <StoryPoints>
              <StoryPoint $w={26} />
              {points.map((t, i) => (
                <StoryPoint key={t} $active={i === 5}>{t}</StoryPoint>
              ))}
            </StoryPoints>
            <Line w={16} h={28} c="#dedede" sw={2}><path d="M2 2l12 12L2 26" /></Line>
          </StoryNav>

          <Dashboard>
            <MapPane>
              <MapDrawing />
              <MapControls>
                <ControlGroup $h={28}>
                  <Control $h={26}><Line w={13} h={13} c="#555" sw={1.2}><circle cx="7.800" cy="5.200" r="4.400" /><path d="M4.500 8.500L1 12" strokeWidth="1.600" /></Line></Control>
                </ControlGroup>
                <ControlGroup $h={103}>
                  <Control $h={28}><Line w={10} h={10} c="#555" sw={2}><path d="M5 0v10M0 5h10" strokeLinecap="butt" /></Line></Control>
                  <Control $h={16}><Line w={10} h={2} c="#555" sw={2}><path d="M0 1h10" strokeLinecap="butt" /></Line></Control>
                  <Control $h={28}>
                    <Line w={15} h={15} c="#555" sw={1.1}><path d="M.7 7.700L7.500 1l6.800 6.700M2.500 6.500v7.900h10V6.500M6 14.200V9h3v5.200" /></Line>
                  </Control>
                  <Control $h={29} $rule><svg width="8" height="12"><path d="M1 1l6.500 5L1 11z" fill="#4d4d4d" /></svg></Control>
                </ControlGroup>
              </MapControls>
            </MapPane>
            <Legend>
              <LegendTitle>Region</LegendTitle>
              {regions.map(([name, color]) => (
                <LegendRow key={name}><Swatch $c={color} />{name}</LegendRow>
              ))}
            </Legend>
          </Dashboard>
        </Page>
        <Scrollbar>
          <svg width="9" height="5"><path d="M0 5L4.500 0 9 5z" fill="#858585" /></svg>
          <ScrollThumb />
          <Spacer />
          <svg width="9" height="5"><path d="M0 0L4.500 5 9 0z" fill="#6b6b6b" /></svg>
        </Scrollbar>
      </Viewport>

      <Taskbar>
        <StartButton>
          <svg width="16" height="16" viewBox="0 0 16 16"><path d="M0 2.300L6.500 1.400V7.500H0zM7.500 1.200L16 0V7.500H7.500zM0 8.500h6.500v6.100L0 13.700zM7.500 8.500H16V16L7.500 14.800z" fill="#fff" /></svg>
        </StartButton>
        <SearchBox>
          <Line w={17} h={17} c="#1a1a1a" sw={1.3}><circle cx="10.500" cy="6" r="5.300" /><path d="M6.500 9.800L.8 15.800" /></Line>
          <SearchHint>Type here to search</SearchHint>
          <Spacer />
          <Suitcases />
        </SearchBox>
        <TrayItem $w={51}>
          <Line w={18} h={16} c="#fff" sw={1.2}><path d="M1.500 0v3h10V0M1.500 16v-3h10v3M1.500 5h10v6h-10zM15.500 0v3M15.500 8v8" /><path d="M14.500 4h2v3h-2z" fill="#fff" stroke="none" /></Line>
        </TrayItem>
        <AppButton $top={7} $active><EdgeIcon /></AppButton>
        <AppButton $top={9} $open><MailIcon /></AppButton>
        <AppButton $top={8}><StoreIcon /></AppButton>
        <AppButton $top={6}><GameIcon /></AppButton>
        <AppButton $top={10} $open><FolderIcon /></AppButton>
        <AppButton $top={7} $open><WordIcon /></AppButton>
        <AppButton $top={8} $open>
          <svg width="22" height="22"><rect width="22" height="22" fill="#f7f7f7" /><g transform="translate(2 2)"><TableauMark size={18} mono /></g></svg>
        </AppButton>
        <AppButton $top={8} $open><PhotosIcon /></AppButton>
        <Spacer />
        <TrayItem $w={40}>
          <svg width="20" height="20">
            <defs><linearGradient id="sun" x1="0" y1="0" x2="1" y2="1"><stop offset="0" stopColor="#f8b733" /><stop offset="1" stopColor="#ef6b10" /></linearGradient></defs>
            <circle cx="10" cy="10" r="10" fill="url(#sun)" />
          </svg>
        </TrayItem>
        <TrayText $w={38} $s={14} $ls={-0.55}>35°C</TrayText>
        <TrayText $w={56} $s={14} $ls={-0.5}>Sunny</TrayText>
        <TrayItem $w={26}><Line w={12} h={7} c="#fff" sw={1.4}><path d="M.8 6.200L6 1l5.200 5.200" /></Line></TrayItem>
        <TrayItem $w={22}>
          <Line w={12} h={17} c="#fff" sw={1.1}><rect x="1.500" y="5" width="7" height="7" rx="1" /><path d="M8.500 7.500l2.500-1.500v5L8.500 9.500M2.500 2q3.500-2 7 0M2.500 15q3.500 2 7 0" /></Line>
        </TrayItem>
        <TrayItem $w={26}>
          <Line w={16} h={13} c="#fff" sw={1.1}><path d="M6.500 4.500h7v6h-9v-3M14.500 6v3M1 1v3h4V1M2 .5v1M4 .5v1M3 4v4q0 2 1.500 2" /><path d="M7 6h6v3.500H6z" fill="#fff" stroke="none" /></Line>
        </TrayItem>
        <TrayItem $w={24}>
          <Line w={14} h={14} c="#fff" sw={1.2}><circle cx="11" cy="12" r="1.200" fill="#fff" /><path d="M7.500 12.500A4 4 0 0 1 11.500 8.500M4.500 12.500a7.500 7.500 0 0 1 7.500-7M1 12.500A10.500 10.500 0 0 1 12 1.500" /></Line>
        </TrayItem>
        <TrayItem $w={24}>
          <Line w={17} h={14} c="#fff" sw={1.2}><path d="M1 5h2.500L7 2v10L3.500 9H1zM9 5q1.200 2 0 4M11 3.500q2.300 3.500 0 7" /><path d="M13 1.500q4 5.500 0 11" stroke="#999" /></Line>
        </TrayItem>
        <TrayText $w={36} $s={12} $ls={-0.35} $pl={5}>ENG</TrayText>
        <Clock><span>08:14</span><span>11-04-2023</span></Clock>
        <TrayItem $w={49}>
          <svg width="26" height="26" viewBox="0 0 26 26">
            <path d="M1 1h16v11H9l-3 4v-4H1z" fill="#fff" />
            <path d="M3.500 4h11M3.500 6.500h11M3.500 9h7" stroke="#333" strokeWidth="1.100" />
            <circle cx="16.500" cy="16.500" r="8" fill="#333" stroke="#9a9a9a" />
            <text x="16.500" y="21" fontSize="12" fill="#fff" textAnchor="middle" fontFamily="Open Sans">1</text>
          </svg>
        </TrayItem>
        <DesktopEdge />
      </Taskbar>
    </Screen>
  );
}
